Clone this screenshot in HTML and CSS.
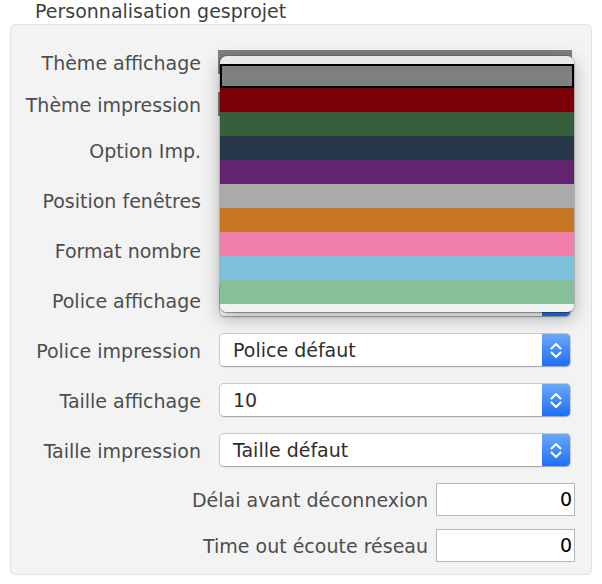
FILE: index.html
```html
<!DOCTYPE html>
<html lang="fr">
<head>
<meta charset="utf-8">
<title>Personnalisation gesprojet</title>
<link rel="stylesheet" href="styles.css">
</head>
<body>
<div class="page">
  <div class="title">Personnalisation gesprojet</div>
  <div class="group">
    <div class="fields">
      <div class="row row-small"><span class="label">Thème affichage</span><div class="swatch"></div></div>
      <div class="row row-small"><span class="label">Thème impression</span><div class="swatch"></div></div>
      <div class="row"><span class="label">Option Imp.</span></div>
      <div class="row"><span class="label">Position fenêtres</span></div>
      <div class="row"><span class="label">Format nombre</span></div>
      <div class="row"><span class="label">Police affichage</span>
        <div class="select"><span class="value"></span>
          <span class="stepper"><svg width="12" height="17" viewBox="0 0 12 17"><polyline points="1.5,6.5 6,2 10.5,6.5" /><polyline points="1.5,10.5 6,15 10.5,10.5" /></svg></span>
        </div>
      </div>
      <div class="row"><span class="label">Police impression</span>
        <div class="select"><span class="value">Police défaut</span>
          <span class="stepper"><svg width="12" height="17" viewBox="0 0 12 17"><polyline points="1.5,6.5 6,2 10.5,6.5" /><polyline points="1.5,10.5 6,15 10.5,10.5" /></svg></span>
        </div>
      </div>
      <div class="row"><span class="label">Taille affichage</span>
        <div class="select"><span class="value">10</span>
          <span class="stepper"><svg width="12" height="17" viewBox="0 0 12 17"><polyline points="1.5,6.5 6,2 10.5,6.5" /><polyline points="1.5,10.5 6,15 10.5,10.5" /></svg></span>
        </div>
      </div>
      <div class="row"><span class="label">Taille impression</span>
        <div class="select"><span class="value">Taille défaut</span>
          <span class="stepper"><svg width="12" height="17" viewBox="0 0 12 17"><polyline points="1.5,6.5 6,2 10.5,6.5" /><polyline points="1.5,10.5 6,15 10.5,10.5" /></svg></span>
        </div>
      </div>
    </div>
    <div class="extras">
      <div class="input-row"><span class="label-inline">Délai avant déconnexion</span><div class="input">0</div></div>
      <div class="input-row"><span class="label-inline">Time out écoute réseau</span><div class="input">0</div></div>
    </div>
    <div class="popup">
      <div class="item item-selected c-gray"></div>
      <div class="item c-red"></div>
      <div class="item c-green"></div>
      <div class="item c-navy"></div>
      <div class="item c-purple"></div>
      <div class="item c-silver"></div>
      <div class="item c-orange"></div>
      <div class="item c-pink"></div>
      <div class="item c-sky"></div>
      <div class="item c-mint"></div>
    </div>
  </div>
</div>
</body>
</html>
```
FILE: styles.css
```css
html, body {
  margin: 0;
  padding: 0;
  background: #ffffff;
}
body {
  font-family: "DejaVu Sans", "Liberation Sans", sans-serif;
  font-size: 19px;
  color: #4d4d4d;
}
.page {
  width: 602px;
  height: 584px;
  overflow: hidden;
}
.title {
  height: 24px;
  line-height: 22px;
  padding-left: 35px;
  color: #3f3f3f;
  box-sizing: border-box;
}
.group {
  position: relative;
  margin-left: 10px;
  width: 582px;
  box-sizing: border-box;
  background: #f3f3f3;
  border: 1px solid #e3e3e3;
  border-radius: 5px;
  padding: 24px 16px 12px 0;
}
.fields {
  display: flex;
  flex-direction: column;
  gap: 16px;
}
.row {
  display: flex;
  align-items: center;
  height: 34px;
}
.row-small {
  height: 26px;
}
.label {
  width: 190px;
  text-align: right;
  white-space: nowrap;
  flex: none;
  padding-top: 1px;
}
.swatch {
  margin-left: 17px;
  width: 354px;
  height: 24px;
  background: #7f7f7f;
}
.select {
  margin-left: 18px;
  width: 352px;
  height: 34px;
  box-sizing: border-box;
  display: flex;
  align-items: center;
  background: #ffffff;
  border: 1px solid #c8c8c8;
  border-bottom-color: #a8a8a8;
  border-radius: 5px;
  box-shadow: 0 1px 1px rgba(0,0,0,0.06);
  overflow: hidden;
}
.value {
  flex: 1;
  padding-left: 13px;
  color: #2e2e2e;
  white-space: nowrap;
}
.stepper {
  width: 28px;
  height: 100%;
  display: flex;
  align-items: center;
  justify-content: center;
  background: linear-gradient(#6ba8fa, #1e6ff5);
}
.stepper svg {
  display: block;
}
.stepper polyline {
  fill: none;
  stroke: #ffffff;
  stroke-width: 2;
  stroke-linecap: round;
  stroke-linejoin: round;
}
.extras {
  margin-top: 16px;
  display: flex;
  flex-direction: column;
  gap: 13px;
}
.input-row {
  display: flex;
  align-items: center;
  justify-content: flex-end;
  gap: 8px;
  height: 33px;
}
.label-inline {
  white-space: nowrap;
}
.input {
  width: 139px;
  height: 33px;
  box-sizing: border-box;
  border: 1px solid #b8b8b8;
  background: #ffffff;
  color: #000000;
  text-align: right;
  padding-right: 2px;
  line-height: 31px;
}
.popup {
  position: absolute;
  left: 209px;
  top: 31px;
  width: 354px;
  height: 256px;
  box-sizing: border-box;
  padding: 8px 0;
  border-radius: 7px;
  background: linear-gradient(#e8e9e9, #f1f2f2);
  box-shadow: 0 0 0 1px rgba(0,0,0,0.14), 0 1px 1px rgba(0,0,0,0.25), 0 6px 18px rgba(0,0,0,0.3);
  display: flex;
  flex-direction: column;
}
.item {
  height: 24px;
  flex: none;
}
.item-selected {
  box-shadow: inset 0 0 0 2px #000000;
}
.c-gray { background: #808080; }
.c-red { background: #7b0006; }
.c-green { background: #35603b; }
.c-navy { background: #28384a; }
.c-purple { background: #63246f; }
.c-silver { background: #aaaaaa; }
.c-orange { background: #c67622; }
.c-pink { background: #f17fac; }
.c-sky { background: #7cc1d9; }
.c-mint { background: #88bf9b; }
```
